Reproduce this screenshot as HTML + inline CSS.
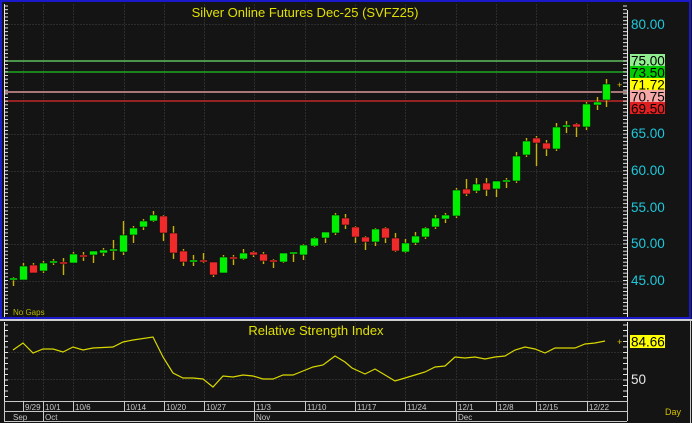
<!DOCTYPE html>
<html><head><meta charset="utf-8"><style>
html,body{margin:0;padding:0;background:#141414;width:692px;height:423px;overflow:hidden}
svg{display:block}
text{font-family:"Liberation Sans",Arial,sans-serif}
</style></head><body>
<svg id="s" width="692" height="423" viewBox="0 0 692 423" xmlns="http://www.w3.org/2000/svg">
<rect width="692" height="423" fill="#141414"/>
<g id="grid" stroke="#2c2c2c" stroke-width="1" stroke-dasharray="2,1"></g>
<!-- horizontal level lines -->
<line x1="4" y1="61" x2="627" y2="61" stroke="#5fbf5f" stroke-width="1.5"/>
<line x1="4" y1="72" x2="627" y2="72" stroke="#1faa1f" stroke-width="1.5"/>
<line x1="4" y1="92" x2="627" y2="92" stroke="#d89898" stroke-width="1.5"/>
<line x1="4" y1="101" x2="627" y2="101" stroke="#c02828" stroke-width="1.5"/>
<g id="candles"></g>
<!-- axis lines -->
<line x1="627.5" y1="10" x2="627.5" y2="318" stroke="#e8e8e8" stroke-width="1"/>
<line x1="627.5" y1="322" x2="627.5" y2="401" stroke="#e8e8e8" stroke-width="1"/>
<line x1="4.5" y1="4" x2="4.5" y2="318" stroke="#e8e8e8" stroke-width="1"/>
<line x1="4.5" y1="322" x2="4.5" y2="401" stroke="#e8e8e8" stroke-width="1"/>
<g id="ticks" stroke="#e0e0e0" stroke-width="1"></g>
<!-- frame -->
<rect x="1" y="1" width="689" height="317" fill="none" stroke="#1a1acc" stroke-width="2"/>
<line x1="0" y1="320" x2="692" y2="320" stroke="#cfcfcf" stroke-width="2"/>
<line x1="4" y1="401.5" x2="627" y2="401.5" stroke="#c8c8c8"/>
<line x1="4" y1="411.5" x2="627" y2="411.5" stroke="#c8c8c8"/>
<line x1="4" y1="421.5" x2="627" y2="421.5" stroke="#c8c8c8"/>
<line x1="690.5" y1="320" x2="690.5" y2="423" stroke="#c8c8c8"/>
<g id="dticks" stroke="#c8c8c8"></g>
<!-- price labels -->
<g font-size="13.5" fill="#1ec8dc">
<text x="631" y="29">80.00</text>
<text x="631" y="138">65.00</text>
<text x="631" y="175">60.00</text>
<text x="631" y="212">55.00</text>
<text x="631" y="248">50.00</text>
<text x="631" y="285">45.00</text>
</g>
<rect x="630" y="54" width="35" height="13" fill="#90ee90"/>
<rect x="630" y="66" width="35" height="12" fill="#00cc00"/>
<rect x="630" y="78" width="35" height="12" fill="#ffff00"/>
<rect x="630" y="90" width="35" height="12" fill="#f4a8a8"/>
<rect x="630" y="102" width="35" height="12" fill="#e02020"/>
<g font-size="13.5" fill="#000">
<text x="631" y="65.5">75.00</text>
<text x="631" y="77.5">73.50</text>
<text x="631" y="89.5">71.72</text>
<text x="631" y="101.5">70.75</text>
<text x="631" y="113.5">69.50</text>
</g>
<text x="617" y="88" font-size="9" fill="#d4c000">+</text>
<text x="305" y="17" font-size="13" fill="#e0e000" text-anchor="middle">Silver  Online  Futures  Dec-25  (SVFZ25)</text>
<text x="13" y="315" font-size="8" fill="#b8b800">No Gaps</text>
<!-- RSI -->
<text x="316" y="335" font-size="13" fill="#e0e000" text-anchor="middle">Relative  Strength  Index</text>
<polyline fill="none" stroke="#d8d800" stroke-width="1.2" points="13,350 23,343 33,353 43,349 53,349 63,352 73,347 83,350 93,348 113,347 123,342 133,340 153,337 163,357 173,373 183,378 193,378 203,379 213,387 223,376 233,377 243,375 253,376 263,379 273,379 283,375 293,375 303,371 313,367 323,365 335,356 345,362 352,368 365,374 375,369 395,381 405,378 415,375 425,372 435,367 445,366 455,357 465,358 475,357 485,359 495,357 505,356 515,350 525,347 535,349 545,353 555,348 575,348 585,344 595,343 605,341"/>
<rect x="630" y="335" width="35" height="13" fill="#ffff00"/>
<text x="631" y="346.5" font-size="13.5" fill="#000">84.66</text>
<text x="617" y="345" font-size="9" fill="#d4c000">+</text>
<text x="631" y="384" font-size="13.5" fill="#e8e8e8">50</text>
<!-- dates -->
<g font-size="8" fill="#c8c8c8">
<text x="25" y="410">9/29</text><text x="45" y="410">10/1</text><text x="75" y="410">10/6</text>
<text x="126" y="410">10/14</text><text x="166" y="410">10/20</text><text x="206" y="410">10/27</text>
<text x="256" y="410">11/3</text><text x="307" y="410">11/10</text><text x="357" y="410">11/17</text>
<text x="407" y="410">11/24</text><text x="458" y="410">12/1</text><text x="498" y="410">12/8</text>
<text x="538" y="410">12/15</text><text x="589" y="410">12/22</text>
<text x="13" y="420">Sep</text><text x="45" y="420">Oct</text><text x="256" y="420">Nov</text><text x="458" y="420">Dec</text>
</g>
<text x="665" y="415" font-size="9" fill="#d4c000">Day</text>
</svg>
<script>
var NS="http://www.w3.org/2000/svg";
function el(p,t,a){var e=document.createElementNS(NS,t);for(var k in a)e.setAttribute(k,a[k]);p.appendChild(e);return e;}
var g=document.getElementById('grid');
[24,134,171,207,244,281].forEach(function(y){el(g,'line',{x1:5,y1:y+.5,x2:627,y2:y+.5});});
[352,379].forEach(function(y){el(g,'line',{x1:5,y1:y+.5,x2:627,y2:y+.5});});
var dx=[23,43,73,124,164,204,254,305,355,405,456,496,536,587];
dx.forEach(function(x){el(g,'line',{x1:x+.5,y1:4,x2:x+.5,y2:318});el(g,'line',{x1:x+.5,y1:322,x2:x+.5,y2:401});});
var dt=document.getElementById('dticks');
dx.forEach(function(x){el(dt,'line',{x1:x+.5,y1:401,x2:x+.5,y2:411});});
[4,43,254,456,627].forEach(function(x){el(dt,'line',{x1:x+.5,y1:411,x2:x+.5,y2:421});});
el(dt,'line',{x1:4.5,y1:401,x2:4.5,y2:421});el(dt,'line',{x1:627.5,y1:401,x2:627.5,y2:421});
var tk=document.getElementById('ticks');
for(var y=6;y<316;y+=3.66){el(tk,'line',{x1:623,y1:y,x2:627,y2:y});el(tk,'line',{x1:5,y1:y,x2:8,y2:y});}
for(var y=325;y<400;y+=5.5){el(tk,'line',{x1:623,y1:y,x2:627,y2:y});el(tk,'line',{x1:5,y1:y,x2:8,y2:y});}
// x, top, bottom, wickTop, wickBot, color(g/r)
var C=[
[13,279,279,277,286,'g'],[23,266,280,263,280,'g'],[33,265,273,263,273,'r'],[43,263,271,261,273,'g'],[53,261,263,259,265,'g'],
[63,262,264,258,275,'r'],[73,254,263,252,263,'g'],[83,256,256,252,261,'r'],[93,251,255,251,263,'g'],[103,250,253,248,256,'g'],
[113,250,250,240,260,'g'],[123,235,252,221,255,'g'],[133,228,235,226,243,'g'],[143,221,227,219,230,'g'],[153,215,221,211,222,'g'],
[163,216,233,215,241,'r'],[173,233,253,226,259,'r'],[183,251,262,249,266,'r'],[193,261,261,255,266,'g'],[203,261,261,253,263,'r'],
[213,262,275,262,277,'r'],[223,257,273,255,273,'g'],[233,258,258,255,265,'r'],[243,253,259,249,260,'g'],[253,252,255,251,257,'r'],
[263,254,261,252,264,'r'],[273,260,262,259,268,'r'],[283,253,262,253,263,'g'],[293,253,253,252,262,'g'],[303,245,255,244,260,'g'],
[314,238,246,237,247,'g'],[325,232,238,232,243,'g'],[335,215,233,213,235,'g'],[345,218,225,214,229,'r'],[355,227,237,226,243,'r'],
[365,237,242,236,250,'r'],[375,229,242,228,246,'g'],[385,228,238,227,243,'r'],[395,238,251,233,252,'r'],[405,243,252,239,253,'g'],
[415,236,243,232,245,'g'],[425,228,237,227,239,'g'],[435,218,227,215,229,'g'],[445,215,219,213,223,'g'],[456,190,216,188,218,'g'],
[466,189,194,179,196,'r'],[476,184,191,178,193,'g'],[486,183,190,178,196,'r'],[496,181,189,181,197,'g'],[506,181,181,178,188,'g'],
[516,156,181,152,183,'g'],[526,141,155,138,157,'g'],[536,138,143,136,166,'r'],[546,143,149,140,156,'r'],[556,127,149,123,151,'g'],
[566,126,126,121,133,'g'],[576,124,127,123,137,'r'],[586,104,127,102,130,'g'],[597,102,105,97,110,'g'],[606,84,100,79,107,'g']];
var cg=document.getElementById('candles');
C.forEach(function(c){
 el(cg,'line',{x1:c[0]+.5,y1:c[3],x2:c[0]+.5,y2:c[4],stroke:'#c8b400','stroke-width':1.4});
 var h=Math.max(c[2]-c[1],2);var col=c[5]=='g'?'#00ee00':'#ee2a2a';
 el(cg,'rect',{x:c[0]-3.5,y:c[1]-(c[2]-c[1]<2?1:0),width:8,height:h,fill:col,stroke:'#0a0a0a','stroke-width':0.6});
});
</script>
</body></html>
